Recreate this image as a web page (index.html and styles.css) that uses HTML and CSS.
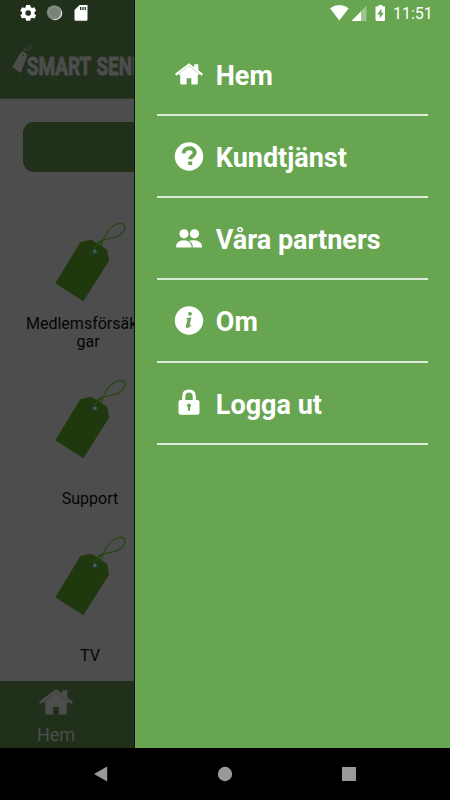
FILE: index.html
```html
<!DOCTYPE html>
<html lang="sv">
<head>
<meta charset="utf-8">
<title>Smart Senior</title>
<link rel="stylesheet" href="styles.css">
</head>
<body>
<svg width="0" height="0" class="defs">
  <symbol id="house" viewBox="0 0 34 26">
    <path d="M17 0 0 12.800 1.500 15 17 3 32.500 15 34 12.800 28.300 8.500V1.200h-5v3.500z"/>
    <path d="M17 3.300 3.800 13.600 6.300 14V24.600q0 1 1 1h6.900v-7.500h5.600v7.500h6.900q1 0 1-1V14L30.200 13.600z"/>
  </symbol>
  <symbol id="tag" viewBox="0 0 76 84">
    <path d="M5.300 63.300 30.300 22.300 41 19.700Q50 24 57.300 30L59 40.700 33.300 81.300z" fill="#20380d"/>
    <path d="M44 28Q50 23 53 20Q58 8 66 4.500Q75 1 75 8Q73 15 64 17.500Q59 19 53 20Q48 21 46 26M53 20Q52 25 50 28" fill="none" stroke="#254613" stroke-width="1.200"/>
    <circle cx="44.800" cy="31.300" r="2.500" fill="#505956" stroke="#12402a" stroke-width="1.300"/>
  </symbol>
</svg>
<div class="screen">
  <div class="page">
    <header class="header">
      <svg class="logo" width="135" height="99" viewBox="0 0 135 99">
        <path d="M12.300 67.300 20 53.500 22.500 51.500Q25 52 27 54.500L26.500 58 20.800 73z"/>
        <circle cx="23.200" cy="55.200" r=".8" fill="#20301b"/>
        <path class="string" d="M23 54Q24 47 29 45.500Q33 45 31 48Q28 51 25 50"/>
        <text x="26.800" y="74.800" textLength="64.500" lengthAdjust="spacingAndGlyphs">SMART</text>
        <text x="96.500" y="74.800" textLength="41" lengthAdjust="spacingAndGlyphs">SENI</text>
      </svg>
    </header>
    <main class="content">
      <div class="banner"></div>
      <section class="tiles">
        <div class="tile"><svg class="tag"><use href="#tag"/></svg><div class="caption two"><div class="first">Medlemsförsäk</div>gar</div></div>
        <div class="tile"><svg class="tag"><use href="#tag"/></svg><div class="caption">Support</div></div>
        <div class="tile"><svg class="tag"><use href="#tag"/></svg><div class="caption">TV</div></div>
      </section>
    </main>
    <footer class="tabs">
      <div class="tab"><svg width="34" height="26"><use href="#house"/></svg><span>Hem</span></div>
    </footer>
  </div>
  <nav class="drawer">
    <div class="item"><svg class="icon" viewBox="0 0 30 30"><use href="#house" x="1" y="4" width="28" height="22"/></svg><span>Hem</span></div>
    <div class="item"><svg class="icon" viewBox="0 0 30 30"><circle cx="15" cy="14.500" r="14.200"/><path class="mark" d="M9.500 11.300C10 4.800 20.900 4.800 20.700 10.500C20.700 14.200 16.300 13.800 16.300 17.200"/><path class="dot" d="M14.200 19.500h4v3.500h-4z"/></svg><span>Kundtjänst</span></div>
    <div class="item"><svg class="icon" viewBox="0 0 30 30"><circle cx="10" cy="9.800" r="4.600"/><circle cx="20.500" cy="9.800" r="4.600"/><path d="M2.200 23.500v-2.500Q4 16.500 10 16.300Q13.500 16.300 15.500 18.300Q17.500 20.300 17.500 23.500zM14.800 16.800Q17 16.100 20.500 16.300Q27 17 28 21.500V23.500H18.800Q19 19 14.800 16.800z"/></svg><span>Våra partners</span></div>
    <div class="item"><svg class="icon" viewBox="0 0 30 30"><circle cx="15" cy="14.500" r="14.200"/><circle class="dot" cx="16" cy="7.800" r="1.900"/><path class="dot" d="M12.400 12.200 17.500 11.200 15.400 19.800 17.300 18.400 17.600 19Q15.500 22 13.300 22Q11.300 21.800 12 19.500L13.600 13.200 12.300 13z"/></svg><span>Om</span></div>
    <div class="item"><svg class="icon" viewBox="0 0 30 30"><path class="shackle" d="M9.700 14V8.500Q9.700 3 15 3Q20.300 3 20.300 8.500V14"/><rect x="4.500" y="12" width="21" height="14.700" rx="2"/><circle class="dot" cx="15" cy="17.500" r="2"/><path class="dot" d="M14 17h2v5.700h-2z"/></svg><span>Logga ut</span></div>
  </nav>
  <div class="status">
    <svg width="60" height="24" viewBox="0 0 60 24" class="left">
      <path fill-rule="evenodd" d="M6.200 5h4l.6 2.200 1.300.8 2.200-.7 1.800 3.300-1.700 1.600v1.600l1.700 1.600-1.800 3-2.200-.6-1.300.8-.6 2.200h-4l-.6-2.200-1.300-.8-2.200.6-1.800-3 1.700-1.600v-1.600L.3 10.600l1.800-3.300 2.200.7 1.300-.8zM8.200 10.200a2.800 2.800 0 1 0 0 5.600 2.800 2.800 0 0 0 0-5.600z"/>
      <circle cx="35" cy="13" r="7.200"/><circle cx="34" cy="12.400" r="7.200" fill="#768275"/><circle cx="34" cy="12.400" r="5.200" fill="none" stroke="#a4aca2" stroke-width=".8" stroke-dasharray="1 1"/>
      <path fill-rule="evenodd" d="M59.500 5H67.500V19.500Q67.500 20.800 66.300 20.800H56Q54.500 20.800 54.500 19.500V10zM60 7v3h1.300v-3zm2.300 0v3h1.300v-3zm2.300 0v3h1.300v-3z"/>
    </svg>
    <svg width="60" height="24" viewBox="0 0 60 24" class="signals">
      <path d="M0 8.200Q9.300 1.800 18.700 8.200L9.300 20.500z"/>
      <path opacity=".35" d="M36.500 5.500V21H21.500z"/><path d="M31 11.500V21H21.500z"/>
      <path fill-rule="evenodd" d="M48.500 5h4v1.500h2.500V19.700Q55 21 53.700 21h-7Q45.500 21 45.500 19.700V6.500h3zM51.400 8.500 47.300 14.500h2.500v4l3.900-5.700h-2.300z"/>
    </svg>
    <span class="clock">11:51</span>
  </div>
  <div class="system">
    <svg width="14" height="16"><path d="M13.200.5V15.500L0 8z"/></svg>
    <svg width="16" height="16"><circle cx="8" cy="8" r="7.200"/></svg>
    <svg width="14" height="16"><path d="M0 1h14v14H0z"/></svg>
  </div>
</div>
</body>
</html>
```
FILE: styles.css
```css
* { box-sizing: border-box; }
body { margin: 0; font-family: Roboto, sans-serif; }
svg { display: block; flex: none; }
.defs { position: absolute; }
.screen { position: relative; width: 450px; height: 800px; overflow: hidden; background: #000; display: flex; flex-direction: column; }
.page { width: 135px; height: 748px; overflow: hidden; display: flex; flex-direction: column; background: #4d4d4d; border-right: 1px solid #17101c; }
.header { flex: none; height: 99px; background: #20301b; border-bottom: 1px solid #293724; }
.logo { fill: #4d4d4d; }
.logo text { font: 700 26.500px Roboto, sans-serif; stroke: #4d4d4d; stroke-width: 1; }
.logo .string { fill: none; stroke: #4d4d4d; stroke-width: .6; }
.content { flex: 1; min-height: 0; padding-top: 23px; }
.banner { width: 404px; height: 50px; margin-left: 23px; border-radius: 11px; background: #20301b; }
.tiles { width: 180px; padding-top: 48px; }
.tile { height: 157px; }
.tag { width: 76px; height: 84px; margin-left: 50px; }
.caption { padding-top: 29px; text-align: center; font-size: 16px; line-height: 18px; color: #050505; }
.caption.two { padding-top: 11px; margin-left: 26px; width: 124px; white-space: nowrap; }
.first { text-align: left; }
.tabs { flex: none; height: 67px; background: #20301b; }
.tab { width: 112px; padding-top: 8px; display: flex; flex-direction: column; align-items: center; gap: 9px; color: #4d4d4d; fill: #4d4d4d; font-size: 18px; line-height: 22px; }
.drawer { position: absolute; left: 135px; top: 0; width: 315px; height: 748px; padding: 33.800px 22.500px 0 22px; background: #67a550; color: #fff; }
.item { height: 82.200px; border-bottom: 2px solid #dcebd7; display: flex; align-items: center; gap: 11.500px; padding: 0 0 0 17.300px; font-size: 27px; font-weight: 700; line-height: 32px; }
.item span { padding-top: 4px; }
.icon { width: 30px; height: 30px; margin-top: 1px; fill: #fff; }
.mark { fill: none; stroke: #67a550; stroke-width: 4; }
.icon .dot { fill: #67a550; }
.shackle { fill: none; stroke: #fff; stroke-width: 3.200; }
.status { position: absolute; left: 0; top: 0; width: 450px; height: 27px; display: flex; padding-left: 20px; fill: #fff; color: #fff; }
.status svg { overflow: visible; }
.signals { margin-left: 250px; }
.clock { margin-left: 3px; font-size: 16px; line-height: 28px; }
.system { height: 52px; display: flex; align-items: center; justify-content: space-between; padding: 0 94px; fill: #999; }
```
